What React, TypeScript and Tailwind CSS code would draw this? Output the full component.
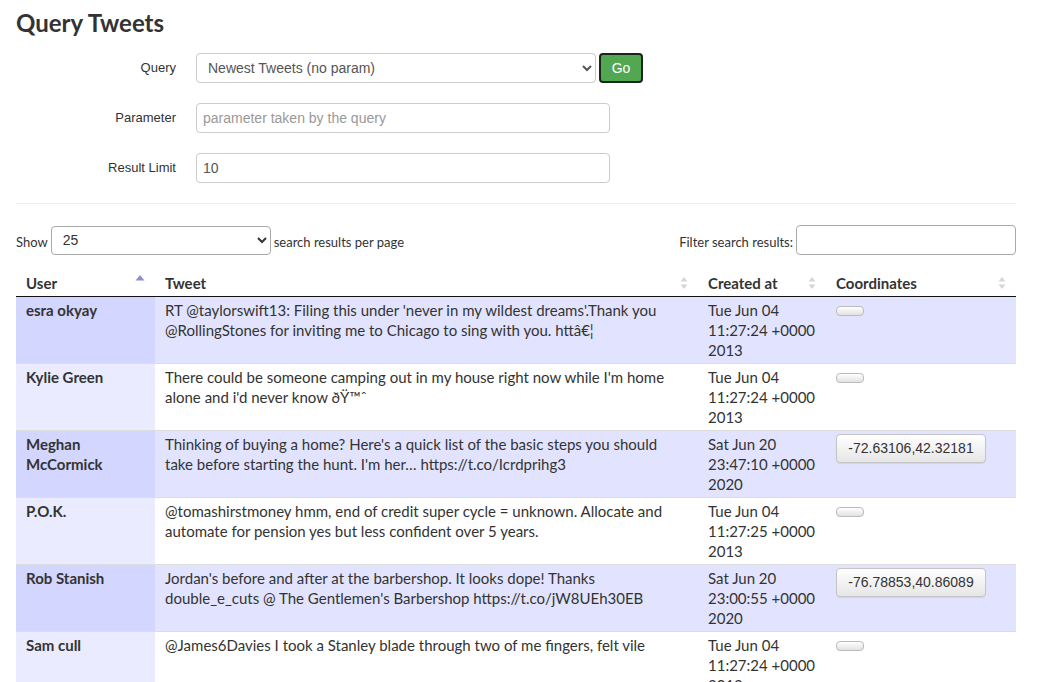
import React from "react";

type Row = {
  user: string[];
  tweet: string[];
  created: string[];
  coords?: string;
};

const rows: Row[] = [
  {
    user: ["esra okyay"],
    tweet: [
      "RT @taylorswift13: Filing this under 'never in my wildest dreams'.Thank you",
      "@RollingStones for inviting me to Chicago to sing with you. httâ€¦",
    ],
    created: ["Tue Jun 04", "11:27:24 +0000", "2013"],
  },
  {
    user: ["Kylie Green"],
    tweet: [
      "There could be someone camping out in my house right now while I'm home",
      "alone and i'd never know ðŸ™ˆ",
    ],
    created: ["Tue Jun 04", "11:27:24 +0000", "2013"],
  },
  {
    user: ["Meghan", "McCormick"],
    tweet: [
      "Thinking of buying a home? Here's a quick list of the basic steps you should",
      "take before starting the hunt. I'm her… https://t.co/Icrdprihg3",
    ],
    created: ["Sat Jun 20", "23:47:10 +0000", "2020"],
    coords: "-72.63106,42.32181",
  },
  {
    user: ["P.O.K."],
    tweet: [
      "@tomashirstmoney hmm, end of credit super cycle = unknown. Allocate and",
      "automate for pension yes but less confident over 5 years.",
    ],
    created: ["Tue Jun 04", "11:27:25 +0000", "2013"],
  },
  {
    user: ["Rob Stanish"],
    tweet: [
      "Jordan's before and after at the barbershop. It looks dope! Thanks",
      "double_e_cuts @ The Gentlemen's Barbershop https://t.co/jW8UEh30EB",
    ],
    created: ["Sat Jun 20", "23:00:55 +0000", "2020"],
    coords: "-76.78853,40.86089",
  },
  {
    user: ["Sam cull"],
    tweet: ["@James6Davies I took a Stanley blade through two of me fingers, felt vile"],
    created: ["Tue Jun 04", "11:27:24 +0000", "2013"],
  },
];

const SortBoth = () => (
  <svg width="8" height="14" viewBox="0 0 8 14" className="shrink-0">
    <path d="M4 1 L7.5 5.5 L0.5 5.5 Z" fill="#d6d6d6" />
    <path d="M4 13 L7.5 8.5 L0.5 8.5 Z" fill="#d6d6d6" />
  </svg>
);

const SortAsc = () => (
  <svg width="10" height="14" viewBox="0 0 10 14" className="mb-[4px] shrink-0">
    <path d="M5 1 L9.5 6.5 L0.5 6.5 Z" fill="#8e8ed8" />
  </svg>
);

const Lines = ({ lines }: { lines: string[] }) => (
  <>
    {lines.map((l, i) => (
      <div key={i} className="whitespace-nowrap">
        {l}
      </div>
    ))}
  </>
);

export default function App() {
  return (
    <div className="min-h-screen bg-white px-4 text-[#333]">
      <h1 className="pt-[8px] font-['Lato',sans-serif] text-[24px] leading-[30px] font-bold text-[#333]">
        Query Tweets
      </h1>

      {/* query form */}
      <div className="mt-[15px] flex flex-col gap-5 font-['Liberation_Sans',Arial,sans-serif]">
        <div className="flex items-center">
          <label className="w-[160px] text-right text-[13px] text-[#333]">Query</label>
          <select
            defaultValue="newest"
            className="ml-5 h-[30px] w-[400px] rounded-[4px] border border-[#ccc] bg-white pl-[7px] pr-2 text-[14px] text-[#555]"
          >
            <option value="newest">Newest Tweets (no param)</option>
          </select>
          <button className="ml-[3px] h-[30px] w-[44px] rounded-[4px] border-2 border-[#1b261b] bg-[#52a852] text-[14px] text-white">
            Go
          </button>
        </div>
        <div className="flex items-center">
          <label className="w-[160px] text-right text-[13px] text-[#333]">Parameter</label>
          <input
            placeholder="parameter taken by the query"
            className="ml-5 h-[30px] w-[414px] rounded-[4px] border border-[#ccc] bg-white px-[6px] text-[14px] text-[#555] placeholder:text-[#999]"
          />
        </div>
        <div className="flex items-center">
          <label className="w-[160px] text-right text-[13px] text-[#333]">Result Limit</label>
          <input
            defaultValue="10"
            className="ml-5 h-[30px] w-[414px] rounded-[4px] border border-[#ccc] bg-white px-[6px] text-[14px] text-[#555]"
          />
        </div>
      </div>

      <div className="mt-5 w-[1000px] border-t border-[#eee]" />

      {/* datatable controls */}
      <div className="mt-[21px] flex w-[1000px] items-center justify-between font-['Lato',sans-serif] text-[13px] text-[#333]">
        <div className="flex items-center">
          <span className="mt-[5px]">Show</span>
          <select
            defaultValue="25"
            className="ml-[3px] h-[29px] w-[220px] rounded-[4px] border border-[#aaa] bg-white pl-[7px] font-['Liberation_Sans',Arial,sans-serif] text-[14px] text-[#333]"
          >
            <option value="25">25</option>
          </select>
          <span className="mt-[5px] ml-[3px]">search results per page</span>
        </div>
        <div className="flex items-center">
          <span className="mt-[5px]">Filter search results:</span>
          <input className="ml-[3px] h-[30px] w-[220px] rounded-[4px] border border-[#aaa] bg-white px-2" />
        </div>
      </div>

      {/* table */}
      <table className="mt-[15px] w-[1000px] table-fixed border-collapse font-['Lato',sans-serif] text-[15px] leading-[20px] text-[#333]">
        <colgroup>
          <col className="w-[139px]" />
          <col className="w-[543px]" />
          <col className="w-[128px]" />
          <col className="w-[190px]" />
        </colgroup>
        <thead>
          <tr className="border-b border-[#111]">
            {["User", "Tweet", "Created at", "Coordinates"].map((h, i) => (
              <th key={h} className="px-[10px] py-[3px] text-left font-bold">
                <div className="flex items-center justify-between">
                  <span>{h}</span>
                  {i === 0 ? <SortAsc /> : <SortBoth />}
                </div>
              </th>
            ))}
          </tr>
        </thead>
        <tbody>
          {rows.map((r, i) => {
            const odd = i % 2 === 0;
            return (
              <tr key={i} className={`${i > 0 ? "border-t border-[#ddd]" : ""} ${odd ? "bg-[#e2e4ff]" : "bg-white"}`}>
                <td className={`px-[10px] pt-[3px] pb-[3px] align-top font-bold ${odd ? "bg-[#d3d6ff]" : "bg-[#eaebff]"}`}>
                  <Lines lines={r.user} />
                </td>
                <td className="px-[10px] pt-[3px] pb-[3px] align-top">
                  <Lines lines={r.tweet} />
                </td>
                <td className="px-[10px] pt-[3px] pb-[3px] align-top">
                  <Lines lines={r.created} />
                </td>
                <td className="px-[10px] pt-[3px] pb-[3px] align-top">
                  {r.coords ? (
                    <button className="block h-[29px] w-[150px] rounded-[4px] border border-[#c4c4c4] bg-gradient-to-b from-white to-[#e6e6e6] font-['Liberation_Sans',Arial,sans-serif] text-[14px] leading-[27px] text-[#333] shadow-[0_1px_1px_rgba(0,0,0,0.08)]">
                      {r.coords}
                    </button>
                  ) : (
                    <button className="mt-[6px] block h-[10px] w-[28px] rounded-[4px] border border-[#bbb] bg-gradient-to-b from-white to-[#e2e2e2]" />
                  )}
                </td>
              </tr>
            );
          })}
        </tbody>
      </table>
    </div>
  );
}
